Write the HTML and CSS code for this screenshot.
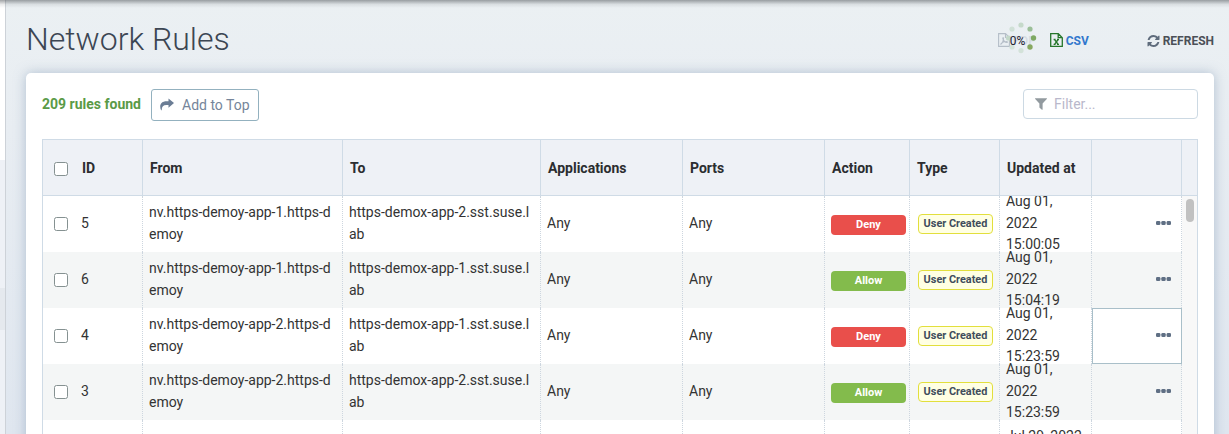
FILE: index.html
```
<!DOCTYPE html>
<html lang="en">
<head>
<meta charset="utf-8">
<title>Network Rules</title>
<link rel="stylesheet" href="styles.css">
</head>
<body>
<svg class="defs" width="0" height="0">
  <symbol id="dots" viewBox="0 0 15 4"><rect width="4.4" height="4" rx="1.3"/><rect x="5.3" width="4.4" height="4" rx="1.3"/><rect x="10.6" width="4.4" height="4" rx="1.3"/></symbol>
</svg>
<div class="app">
  <aside class="side"><div class="side-top"></div><div class="side-item"></div><div class="side-active"></div></aside>
  <main class="main">
    <header class="head">
      <h1 class="title">Network Rules</h1>
      <div class="tools">
        <div class="pdf">
          <svg class="pdf-icon" viewBox="0 0 12 14"><path d="M.6.6h6.9l3.9 3.9v8.9H.6zM7.5.6v3.9h3.9M2.5 11.5c1.5-.6 3.3-4 3-6.3-.1-.8-.9-.5-.7.3.3 2 2.300 4 4.200 3.900.9-.2.3-1-.8-.9-1.800.1-4.600.9-5.700 3"/></svg>
          <span class="pdf-label">PDF</span>
          <svg class="spinner" viewBox="0 0 34 34">
            <circle cx="17" cy="4" r="2.600" fill="#c5d9ca"/><circle cx="26" cy="8" r="2.600" fill="#9bbf98"/><circle cx="29.500" cy="17" r="2.700" fill="#7ea963"/><circle cx="26" cy="26" r="2.700" fill="#87a860"/><circle cx="17" cy="29.600" r="2.600" fill="#d3e2d9"/><circle cx="8" cy="26" r="2.600" fill="#d3e2d9"/><circle cx="4.500" cy="17" r="2.600" fill="#c3d8c9"/><circle cx="8" cy="8" r="2.600" fill="#d0e0d7"/>
          </svg>
          <span class="pct">0%</span>
        </div>
        <div class="csv">
          <svg class="csv-icon" viewBox="0 0 13 14"><path d="M.7.7h7.600l4 4v8.600H.7zM8.200.7v4h4"/><path d="M3.600 6.500h2M7 6.500h2M3.600 11.300h2M7 11.300h2M4.600 6.500l3.500 4.800M8.100 6.500l-3.500 4.800"/></svg>
          <span>CSV</span>
        </div>
        <div class="refresh">
          <svg class="refresh-icon" viewBox="0 0 1536 1536"><path d="M1511 928q0 5-1 7-64 268-268 434.500T764 1536q-146 0-282.500-55T238 1324l-129 129q-19 19-45 19t-45-19-19-45V960q0-26 19-45t45-19h448q26 0 45 19t19 45-19 45l-137 137q71 66 161 102t187 36q134 0 250-65t186-179q11-17 53-117 8-23 30-23h192q13 0 22.500 9.500t9.500 22.500zm25-800v448q0 26-19 45t-45 19h-448q-26 0-45-19t-19-45 19-45l138-138Q969 256 768 256q-134 0-250 65T332 500q-11 17-53 117-8 23-30 23H50q-13 0-22.500-9.500T18 608v-7q65-268 270-434.500T768 0q146 0 284 55.500T1297 212l130-129q19-19 45-19t45 19 19 45z"/></svg>
          <span>REFRESH</span>
        </div>
      </div>
    </header>
    <section class="card">
      <div class="bar">
        <span class="count">209 rules found</span>
        <button class="add"><svg class="add-icon" viewBox="0 0 14 13"><path d="M8.500.5v2.700H6.500C2.500 3.200.2 5.400.2 8.500c0 1.500.3 2.600.9 3.700.2.3.6.200.6-.2C1.800 8.700 3.200 7 6.500 7h2v2.700L14 5.100z"/></svg><span>Add to Top</span></button>
        <div class="filter"><svg class="filter-icon" viewBox="0 0 12 12"><path d="M.5.3h11c.5 0 .6.4.3.700L7.600 5.400v6c0 .4-.4.6-.7.300L4.600 9.800c-.2-.2-.2-.3-.2-.5V5.400L.2 1C-.1.700 0 .300.500.300z"/></svg><span>Filter...</span></div>
      </div>
      <div class="grid">
        <div class="row hrow">
          <div class="cell id"><i class="cb"></i><span>ID</span></div><div class="cell">From</div><div class="cell">To</div><div class="cell">Applications</div><div class="cell">Ports</div><div class="cell">Action</div><div class="cell">Type</div><div class="cell">Updated at</div><div class="cell"></div><div class="cell last"></div>
        </div>
        <div class="body">
          <div class="rows">
            <div class="row">
              <div class="cell id"><i class="cb"></i><span>5</span></div><div class="cell">nv.https-demoy-app-1.https-d<br>emoy</div><div class="cell">https-demox-app-2.sst.suse.l<br>ab</div><div class="cell">Any</div><div class="cell">Any</div><div class="cell"><b class="tag deny">Deny</b></div><div class="cell"><b class="type">User Created</b></div><div class="cell date">Aug 01,<br>2022<br>15:00:05</div><div class="cell more"><svg class="dots"><use href="#dots"/></svg></div>
            </div>
            <div class="row alt">
              <div class="cell id"><i class="cb"></i><span>6</span></div><div class="cell">nv.https-demoy-app-1.https-d<br>emoy</div><div class="cell">https-demox-app-1.sst.suse.l<br>ab</div><div class="cell">Any</div><div class="cell">Any</div><div class="cell"><b class="tag allow">Allow</b></div><div class="cell"><b class="type">User Created</b></div><div class="cell date">Aug 01,<br>2022<br>15:04:19</div><div class="cell more"><svg class="dots"><use href="#dots"/></svg></div>
            </div>
            <div class="row">
              <div class="cell id"><i class="cb"></i><span>4</span></div><div class="cell">nv.https-demoy-app-2.https-d<br>emoy</div><div class="cell">https-demox-app-1.sst.suse.l<br>ab</div><div class="cell">Any</div><div class="cell">Any</div><div class="cell"><b class="tag deny">Deny</b></div><div class="cell"><b class="type">User Created</b></div><div class="cell date">Aug 01,<br>2022<br>15:23:59</div><div class="cell more focus"><svg class="dots"><use href="#dots"/></svg></div>
            </div>
            <div class="row alt">
              <div class="cell id"><i class="cb"></i><span>3</span></div><div class="cell">nv.https-demoy-app-2.https-d<br>emoy</div><div class="cell">https-demox-app-2.sst.suse.l<br>ab</div><div class="cell">Any</div><div class="cell">Any</div><div class="cell"><b class="tag allow">Allow</b></div><div class="cell"><b class="type">User Created</b></div><div class="cell date">Aug 01,<br>2022<br>15:23:59</div><div class="cell more"><svg class="dots"><use href="#dots"/></svg></div>
            </div>
            <div class="row">
              <div class="cell id"></div><div class="cell"></div><div class="cell"></div><div class="cell"></div><div class="cell"></div><div class="cell"></div><div class="cell"></div><div class="cell date two">Jul 29, 2022</div><div class="cell more"></div>
            </div>
          </div>
          <div class="scroll"><div class="thumb"></div></div>
        </div>
      </div>
    </section>
  </main>
</div>
</body>
</html>
```
FILE: styles.css
```
* { box-sizing: border-box; }
html, body { height: 100%; margin: 0; overflow: hidden; }
body { font-family: Roboto, "Liberation Sans", sans-serif; font-size: 14px; color: #333; }
.defs { position: absolute; }
.app { display: flex; height: 434px; overflow: hidden; position: relative; background: linear-gradient(#ebf0f3 0%, #e8edf2 30%, #dfe6ef 100%); }
.app::before { content: ""; position: absolute; left: 0; right: 0; top: 0; height: 8px; background: linear-gradient(rgba(70,75,80,.5), rgba(120,125,130,.15) 55%, transparent); }
.side { width: 6px; flex: none; border-right: 1px solid #cdd2d8; background: #eef1f6; }
.side-top { height: 160px; background: #fff; }
.side-item { height: 128px; }
.side-active { height: 42px; background: #e5e9ee; }
.main { flex: 1; padding: 0 15px 0 20px; }
.head { height: 73px; display: flex; justify-content: space-between; }
.title { margin: 20px 0 0; font-size: 32px; line-height: 38px; font-weight: 300; color: #3c4653; }
.tools { display: flex; align-items: center; height: 34px; margin-top: 24px; font-size: 12px; font-weight: 700; }
.pdf { width: 53px; height: 34px; position: relative; display: flex; align-items: center; }
.pdf-icon { width: 12px; height: 14px; margin-top: -2px; margin-left: 1px; fill: none; stroke: #b5bec8; stroke-width: 1.1; }
.pdf-label { color: #d5dbe1; margin-left: 3px; font-weight: 500; }
.spinner { position: absolute; left: 7px; top: -3px; width: 34px; height: 34px; }
.pct { position: absolute; left: 13px; top: 9px; line-height: 16px; font-weight: 400; color: #223; }
.csv { width: 97px; display: flex; align-items: center; gap: 3px; color: #3278cd; }
.csv-icon { width: 13px; height: 14px; margin-top: -2px; fill: none; stroke: #26762a; stroke-width: 1.3; }
.refresh { display: flex; align-items: center; gap: 3px; color: #4b5057; }
.refresh-icon { width: 13px; height: 12px; margin-top: -1px; fill: #5f6c7c; }
.card { height: 380px; background: #fff; border-radius: 5px; padding: 16px 16px 0; box-shadow: 0 0 12px rgba(120,145,175,.5); }
.bar { display: flex; height: 50px; align-items: flex-start; }
.count { color: #5a9a46; font-weight: 700; line-height: 30px; width: 109px; white-space: nowrap; }
.add { width: 108px; height: 32px; border: 1px solid #93b1bf; border-radius: 3px; background: #fff; padding: 0 8px; display: flex; align-items: center; gap: 8px; font: 14px Roboto, sans-serif; color: #75859a; white-space: nowrap; }
.add-icon { width: 14px; height: 13px; margin-top: -2px; fill: #6b7d95; flex: none; }
.filter { margin-left: auto; width: 175px; height: 30px; border: 1px solid #ccd9e3; border-radius: 4px; display: flex; align-items: center; gap: 7px; padding-left: 11px; color: #b9b8cb; }
.filter-icon { width: 12px; height: 12px; fill: #929a9f; }
.grid { width: 1156px; height: 320px; border: 1px solid #cfdbe6; }
.row { display: grid; grid-template-columns: 100px 200px 198px 142px 142px 85px 90px 92px 90px 15px; grid-template-rows: 100%; height: 56px; }
.cell { padding: 0 6px 2px; border-right: 1px dotted #cdd6df; display: flex; align-items: center; line-height: 22px; white-space: nowrap; min-width: 0; }
.hrow { background: #eef1f6; border-bottom: 1px solid #cfdbe6; height: 56px; font-weight: 700; color: #2b2d30; }
.hrow .cell { padding: 1px 7px 0; border-right: 1px solid #cfdbe6; }
.row .cell.id { padding-left: 11px; }
.hrow .last { border: 0; }
.cb { width: 14px; height: 14px; border: 1px solid #859191; border-radius: 2.500px; background: #fff; margin-right: 13px; position: relative; top: 1px; }
.hrow .id span { padding-left: 1px; }
.body { display: flex; height: 264px; overflow: hidden; }
.rows { flex: 1; overflow: hidden; }
.rows .row { grid-template-columns: 100px 200px 198px 142px 142px 85px 90px 92px 90px; }
.alt { background: #f4f6f6; }
.date { line-height: 21.500px; padding-bottom: 1px; }
.two { align-items: flex-start; padding-top: 6px; }
.tag { width: 75px; height: 20px; border-radius: 4px; color: #fff; font-size: 11px; line-height: 20px; font-weight: 700; text-align: center; margin-top: 3px; flex: none; }
.deny { background: #e94f4b; }
.allow { background: #83bb4c; }
.type { width: 75px; height: 20px; border: 1px solid #e2df3c; border-radius: 4px; background: #ffffe3; color: #414d5c; font-size: 10.900px; line-height: 18px; font-weight: 700; text-align: center; margin: 2px 0 0 2px; flex: none; }
.more { justify-content: flex-end; padding-right: 10px; padding-bottom: 0; }
.dots { width: 15px; height: 4px; fill: #5f6f84; margin-top: -2px; }
.focus { border: 1px solid #a9bfc9; }
.scroll { width: 15px; background: #f8f8f8; padding: 3px 3px; }
.thumb { width: 8px; height: 23px; border-radius: 4px; background: #c1c1c1; margin-left: 1px; }
```
